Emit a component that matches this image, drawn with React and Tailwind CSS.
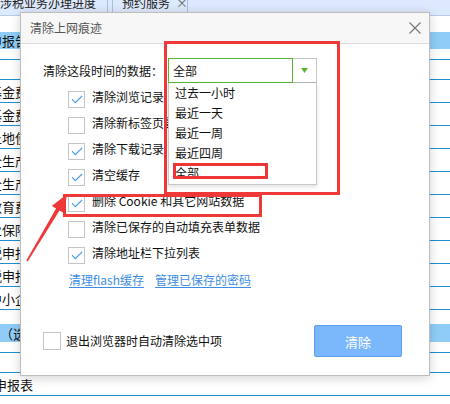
function Box({ checked, size = 17 }) {
  return (
    <div
      className={`${size === 18 ? "w-[18px] h-[18px]" : "w-[17px] h-[17px]"} shrink-0 border border-[#c5c5c5] bg-white flex items-center justify-center`}
    >
      {checked && (
        <svg width="12" height="9" viewBox="0 0 12 9">
          <path d="M1 4.2 L4.3 7.6 L11 1" stroke="#4b9ce8" strokeWidth="1.1" fill="none" />
        </svg>
      )}
    </div>
  );
}

function Row({ text, checked }) {
  return (
    <div className="h-[26px] flex items-center gap-[7px] whitespace-nowrap">
      <Box checked={checked} />
      <span className="text-[12px] leading-[12px] text-[#111] pb-[4px]">{text}</span>
    </div>
  );
}

function BgRow({ text, cls = "", ml = "-ml-[11px]" }) {
  return (
    <div className={`h-[23px] border-b border-[#1f8fd5] flex items-center overflow-hidden whitespace-nowrap ${cls}`}>
      <span className={`${ml} text-[13px] leading-[13px]`}>{text}</span>
    </div>
  );
}

export default function App() {
  return (
    <div className="relative w-[450px] h-[404px] overflow-hidden bg-white font-['Noto_Sans_CJK_SC',sans-serif] text-[#111]">
      {/* background page */}
      <div className="flex flex-col">
        <div className="h-[16px] bg-[#dde9fc] border-b border-[#b9cbe8] flex text-[12px] leading-[12px] text-[#222]">
          <div className="w-[108px] h-full border-r border-[#aebfdb] overflow-hidden">
            <div className="-mt-[3px] whitespace-nowrap">涉税业务办理进度</div>
          </div>
          <div className="ml-[4px] w-[76px] h-full border-l border-r border-[#aebfdb] overflow-hidden pl-[9px]">
            <div className="-mt-[3px] flex whitespace-nowrap">
              预约服务<span className="ml-[6px] text-[#666]">×</span>
            </div>
          </div>
        </div>
        <div className="h-[16px]" />
        <div className="h-[17px] bg-[#8fcdf8] flex items-center overflow-hidden whitespace-nowrap">
          <span className="-ml-[11px] text-[13px] leading-[13px]">申报告</span>
        </div>
        <div className="h-[11px] border-b border-[#1f8fd5]" />
        <div className="h-[20px] border-b border-[#1f8fd5]" />
        <BgRow text="基金费" />
        <BgRow text="基金费" />
        <BgRow text="土地使" />
        <BgRow text="全生产" />
        <BgRow text="全生产" />
        <BgRow text="教育费" />
        <BgRow text="业保障" />
        <BgRow text="税申报" />
        <BgRow text="税申报" />
        <BgRow text="中小企" />
        <div className="h-[14px]" />
        <div className="h-[18px] bg-[#8fcdf8] flex items-center overflow-hidden whitespace-nowrap">
          <span className="ml-0 text-[13px] leading-[13px]">（选填）</span>
        </div>
        <div className="h-[11px] border-b border-[#1f8fd5]" />
        <div className="h-[20px] border-b border-[#1f8fd5]" />
        <BgRow text="纳税申报表" ml="-ml-[32px]" />
        <div className="h-[20px] overflow-hidden whitespace-nowrap pt-[2px]">
          <span className="-ml-[6px] text-[13px] leading-[13px]">上四联结联申报表</span>
        </div>
      </div>

      {/* dialog */}
      <div className="absolute left-[20px] top-[12px] w-[410px] h-[364px] border border-[#bdbdbd] bg-white shadow-[0_2px_10px_rgba(0,0,0,0.18)] flex flex-col">
        <div className="h-[31px] shrink-0 bg-[#f7f7f7] border-b border-[#dcdcdc] flex items-center justify-between pl-[9px] pr-[8px]">
          <span className="text-[12px] leading-[12px] text-[#555]">清除上网痕迹</span>
          <svg width="12" height="12" viewBox="0 0 12 12">
            <path d="M0.5 0.5 L11.5 11.5 M11.5 0.5 L0.5 11.5" stroke="#7a7a7a" strokeWidth="1.2" />
          </svg>
        </div>
        <div className="flex-1 flex flex-col">
          <div className="mt-[14px] pl-[22px] flex items-center h-[25px]">
            <span className="w-[125px] text-[12px] leading-[12px] text-[#111] whitespace-nowrap">清除这段时间的数据：</span>
            <div className="relative z-10 flex h-[25px] w-[149px]">
              <div className="flex-1 border border-[#57b52f] flex items-center pl-[4px] text-[12px] leading-[12px] text-[#111]">
                全部
              </div>
              <div className="w-[24px] border border-[#c7c7c7] border-l-0 border-b-[#b5b5b5] bg-white flex items-center justify-center">
                <svg width="7" height="5" viewBox="0 0 7 5">
                  <path d="M0 0 L7 0 L3.5 5 Z" fill="#5cb832" />
                </svg>
              </div>
              <div className="absolute left-0 top-[25px] w-[149px] border border-t-0 border-[#c8c8c8] bg-white pb-[1px] shadow-[0_2px_4px_rgba(0,0,0,0.12)]">
                {["过去一小时", "最近一天", "最近一周", "最近四周", "全部"].map((t) => (
                  <div key={t} className="h-[20px] pl-[6px] flex items-center text-[12px] leading-[12px] text-[#111]">
                    {t}
                  </div>
                ))}
                <div className="absolute left-[4px] top-[80px] w-[95px] h-[16px] border-[3px] border-[#ee3636]" />
              </div>
            </div>
          </div>

          <div className="mt-[3px] pl-[47px] flex flex-col">
            <Row text="清除浏览记录" checked />
            <Row text="清除新标签页最常访问" checked={false} />
            <Row text="清除下载记录" checked />
            <Row text="清空缓存" checked />
            <Row text="删除 Cookie 和其它网站数据" checked />
            <Row text="清除已保存的自动填充表单数据" checked={false} />
            <Row text="清除地址栏下拉列表" checked />
            <div className="h-[26px] flex items-center gap-[11px] pl-[1px] text-[12px] leading-[12px] text-[#3d8de3] whitespace-nowrap">
              <span className="underline underline-offset-2 pb-[3px]">清理flash缓存</span>
              <span className="underline underline-offset-2 pb-[3px]">管理已保存的密码</span>
            </div>
          </div>

          <div className="flex-1" />

          <div className="mb-[18px] h-[32px] pl-[22px] pr-[27px] flex items-center justify-between">
            <div className="flex items-center gap-[5px]">
              <Box checked={false} size={18} />
              <span className="text-[12px] leading-[12px] text-[#111]">退出浏览器时自动清除选中项</span>
            </div>
            <div className="w-[88px] h-[32px] bg-[#7bb8fb] border border-[#5c9ff0] rounded-[2px] flex items-center justify-center text-white text-[13px] leading-[13px]">
              清除
            </div>
          </div>
        </div>
      </div>

      {/* annotations */}
      <div className="absolute left-[164px] top-[41px] w-[176px] h-[154px] border-[3px] border-[#ef3838] pointer-events-none" />
      <div className="absolute left-[63px] top-[194px] w-[199px] h-[23px] border-[3px] border-[#ef3838] pointer-events-none" />
      <svg className="absolute left-0 top-0 pointer-events-none" width="450" height="404" viewBox="0 0 450 404">
        <polygon
          points="26.3,260.6 56.1,208.5 51.8,205.9 67,194 63.8,213.1 59.5,210.5 27.7,261.4"
          fill="#ef3838"
        />
      </svg>
    </div>
  );
}
